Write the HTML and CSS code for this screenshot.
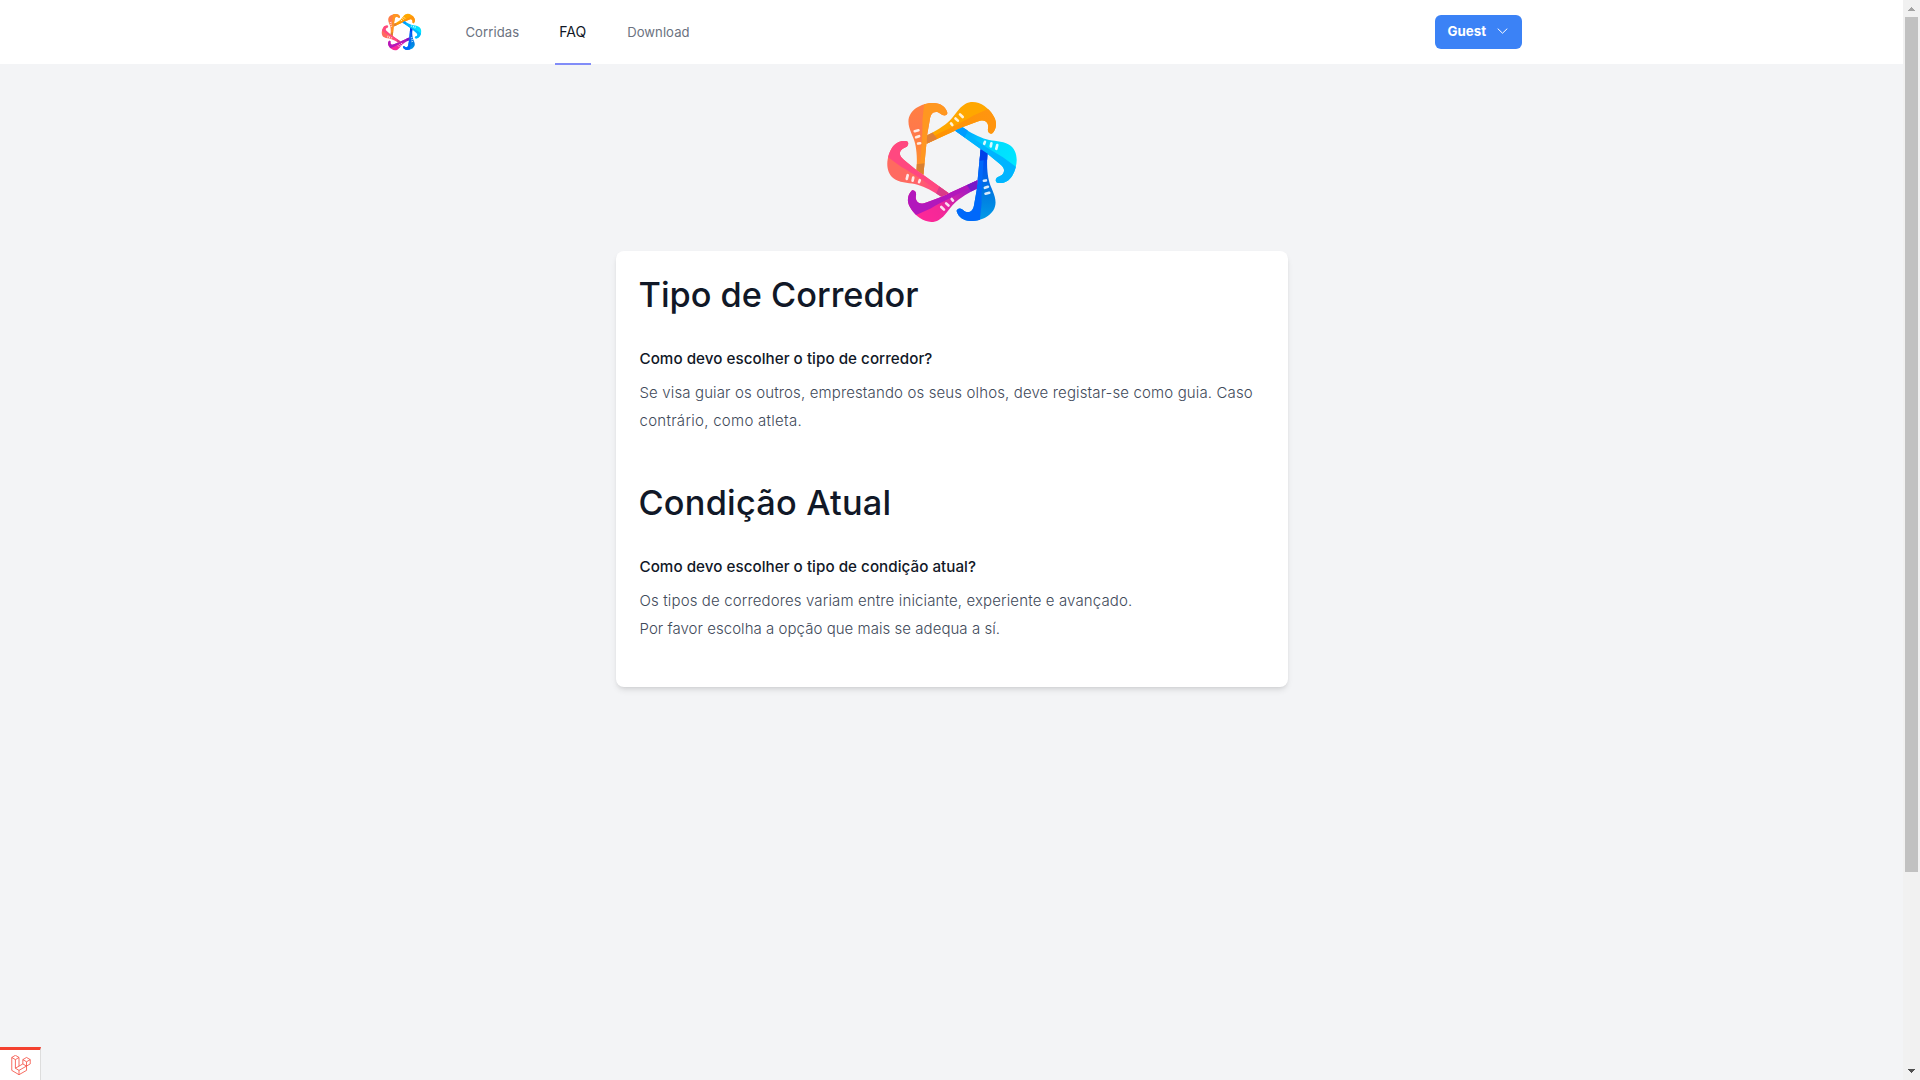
FILE: index.html
```html
<!DOCTYPE html>
<html lang="pt">
<head>
<meta charset="utf-8">
<title>FAQ</title>
<link rel="stylesheet" href="styles.css">
</head>
<body>
<svg class="defs" aria-hidden="true">
  <defs>
    <!-- one running blade; the mark is six of them around the centre -->
    <path id="blade" d="M232 67C233 72 226 77 220 75C212 73 209 65 198 65C186 65 181 75 179 90L172 130L160 254L139 240C142 212 140 182 135 160C130 138 115 118 115 94C115 60 152 38 190 38C212 38 227 50 232 67Z"/>
    <path id="fold" d="M162 42C172 39 181 38 190 38C212 38 227 50 232 67C233 72 226 77 220 75C212 73 209 65 198 65C186 65 181 75 179 90L172 130L160 254L149 247C153 190 158 130 157 90Z"/>
    <path id="tip" d="M140 222L163 219L160 254L139 240Z"/>
    <path id="dashes" d="M134 123L145 120M138 141L147 138M144 160L150 159" stroke="#fff" stroke-width="8" stroke-linecap="round" stroke-opacity=".85" fill="none"/>
    <linearGradient id="g-orange" x1="0" y1="0" x2="0" y2="1"><stop stop-color="#ff8040"/><stop offset=".4" stop-color="#ff784c"/><stop offset="1" stop-color="#ff9a20"/></linearGradient>
    <linearGradient id="g-amber" x1="0" y1="0" x2="0" y2="1"><stop stop-color="#ff9510"/><stop offset="1" stop-color="#ff9300"/></linearGradient>
    <linearGradient id="g-cyan" x1="0" y1="0" x2="0" y2="1"><stop stop-color="#00e8ff"/><stop offset=".45" stop-color="#00dcff"/><stop offset="1" stop-color="#0098ff"/></linearGradient>
    <linearGradient id="g-blue" x1="0" y1="0" x2="0" y2="1"><stop stop-color="#009ce8"/><stop offset=".4" stop-color="#0078e0"/><stop offset="1" stop-color="#0040f8"/></linearGradient>
    <linearGradient id="g-pink" x1="0" y1="0" x2="0" y2="1"><stop stop-color="#ff2898"/><stop offset=".35" stop-color="#f42898"/><stop offset="1" stop-color="#8618d0"/></linearGradient>
    <linearGradient id="g-rose" x1="0" y1="0" x2="0" y2="1"><stop stop-color="#ff6a60"/><stop offset=".45" stop-color="#ff6a60"/><stop offset="1" stop-color="#ff3898"/></linearGradient>
    <symbol id="mark" viewBox="57 38 378 355" overflow="visible">
      <g>
        <use href="#blade" fill="url(#g-orange)"/><use href="#fold" fill="#ff9720"/>
        <use href="#tip" fill="#d98032"/><use href="#dashes"/>
      </g>
      <g transform="rotate(60 246 215.5)">
        <use href="#blade" fill="#ffa700"/><use href="#fold" fill="url(#g-amber)"/>
        <use href="#tip" fill="#df8038"/><use href="#dashes"/>
      </g>
      <g transform="rotate(120 246 215.5)">
        <use href="#blade" fill="url(#g-cyan)"/><use href="#fold" fill="#00b4ff"/>
        <use href="#tip" fill="#009cff"/><use href="#dashes"/>
      </g>
      <g transform="rotate(180 246 215.5)">
        <use href="#blade" fill="url(#g-blue)"/><use href="#fold" fill="#0068fa"/>
        <use href="#tip" fill="#0040e8"/><use href="#dashes"/>
      </g>
      <g transform="rotate(240 246 215.5)">
        <use href="#blade" fill="url(#g-pink)"/><use href="#fold" fill="#b218bc"/>
        <use href="#tip" fill="#7818c8"/><use href="#dashes"/>
      </g>
      <g transform="rotate(300 246 215.5)">
        <use href="#blade" fill="url(#g-rose)"/><use href="#fold" fill="#ff4880"/>
        <use href="#tip" fill="#d93c88"/><use href="#dashes"/>
      </g>
    </symbol>
  </defs>
</svg>
<div class="window">
  <div class="page">
    <nav class="nav">
      <div class="nav-inner">
        <a class="brand"><svg class="brand-mark"><use href="#mark"/></svg></a>
        <div class="links">
          <a class="link">Corridas</a>
          <a class="link active">FAQ</a>
          <a class="link">Download</a>
        </div>
        <button class="guest">Guest
          <svg class="chevron" viewBox="0 0 11 6"><path d="M.7.6L5.5 5.2L10.3.6"/></svg>
        </button>
      </div>
    </nav>
    <main class="main">
      <svg class="hero-mark"><use href="#mark"/></svg>
      <div class="card">
        <section class="section">
          <h1 class="title">Tipo de Corredor</h1>
          <h2 class="question">Como devo escolher o tipo de corredor?</h2>
          <p class="answer">Se visa guiar os outros, emprestando os seus olhos, deve registar-se como guia. Caso<br><span class="loose">contrário, como atleta.</span></p>
        </section>
        <section class="section">
          <h1 class="title wide">Condição Atual</h1>
          <h2 class="question">Como devo escolher o tipo de condição atual?</h2>
          <p class="answer">Os tipos de corredores variam entre iniciante, experiente e avançado.<br><span class="tight">Por favor escolha a opção que mais se adequa a sí.</span></p>
        </section>
      </div>
    </main>
  </div>
  <div class="scrollbar">
    <svg class="arrow up" viewBox="0 0 7 4"><path d="M3 0h1v1h1v1h1v1h1v1H0V3h1V2h1V1h1z"/></svg>
    <div class="thumb"></div>
    <svg class="arrow down" viewBox="0 0 7 4"><path d="M0 0h7v1H6v1H5v1H4v1H3V3H2V2H1V1H0z"/></svg>
  </div>
</div>
<div class="debugbar">
  <svg class="laravel" viewBox="0 0 62 65"><path d="M12.8 1L24.5 8L12.8 15L1 8ZM1 8V50L24.5 64L49 50V36L61 29V15L49 8L37 15V29L12.8 43V15M24.5 8V36M37 15L49 22L61 15M49 22V36L37 29M12.8 43L24.5 50L49 36M24.5 50V64"/></svg>
</div>
</body>
</html>
```
FILE: styles.css
```css
* { box-sizing: border-box; margin: 0; padding: 0; }
body { font-family: Inter, "Open Sans", sans-serif; background: #f3f4f6; overflow: hidden; }
.defs { display: block; width: 0; height: 0; }
.window { display: flex; height: 1080px; }
.page { flex: 1; }

.nav { height: 65px; background: #fff; border-bottom: 1px solid #f3f4f6; }
.nav-inner { display: flex; align-items: center; width: 1140px; height: 65px; margin: 0 auto; padding-bottom: 1px; }
.brand { display: flex; }
.brand-mark { width: 39px; height: 36px; overflow: visible; }
.links { display: flex; align-self: stretch; gap: 32px; margin: 0 auto 0 41px; height: 65px; }
.link { display: flex; align-items: center; padding: 0 4px; font-size: 13.1px; letter-spacing: .06px; color: #6b7280; border-bottom: 2px solid transparent; }
.link.active { width: 36px; color: #111827; font-size: 14px; border-color: #818cf8; }
.guest { display: flex; align-items: center; justify-content: space-between; width: 87px; height: 34px; padding: 0 14px 2px 13px; border: 0; border-radius: 6px; background: #3b82f6; color: #fff; font: 650 13.3px Inter, sans-serif; }
.chevron { width: 11px; height: 6px; fill: none; stroke: #fff; stroke-width: 1; }

.main { display: flex; flex-direction: column; align-items: center; padding-top: 38px; }
.hero-mark { width: 126px; height: 118px; overflow: visible; }
.card { width: 672px; height: 436px; margin-top: 30px; padding: 24px; border-radius: 8px; background: #fff; box-shadow: 0 4px 6px -1px rgba(0,0,0,.1), 0 2px 4px -2px rgba(0,0,0,.1); }
.section { margin-bottom: 48px; }
.title { font-size: 34.3px; font-weight: 500; line-height: 40px; color: #111827; margin-bottom: 32px; margin-left: -1px; }
.wide { letter-spacing: .22px; }
.question { font-size: 15.2px; font-weight: 500; line-height: 24px; letter-spacing: .03px; color: #111827; margin-bottom: 8px; }
.answer { font-size: 15px; line-height: 28px; font-weight: 350; letter-spacing: .13px; color: #414a5a; white-space: nowrap; }
.tight { letter-spacing: .04px; }
.loose { letter-spacing: .28px; }

.scrollbar { display: flex; flex-direction: column; align-items: center; width: 17px; padding: 7px 0; background: #f1f1f1; }
.arrow { display: block; width: 7px; height: 4px; shape-rendering: crispEdges; }
.up { fill: #a3a3a3; }
.down { fill: #505050; margin-top: auto; }
.thumb { width: 13px; height: 855px; margin-top: 6px; background: #c1c1c1; }

/* debug bar stays over the page, in the window corner */
.debugbar { position: fixed; left: 0; bottom: 0; width: 41px; height: 33px; padding: 5px 0 0 11px; background: #fff; border-top: 3px solid #f4412f; border-right: 1px solid #ddd; }
.laravel { display: block; width: 20px; height: 20px; fill: none; stroke: #f4473a; stroke-width: 2.6; stroke-linejoin: round; }
```
